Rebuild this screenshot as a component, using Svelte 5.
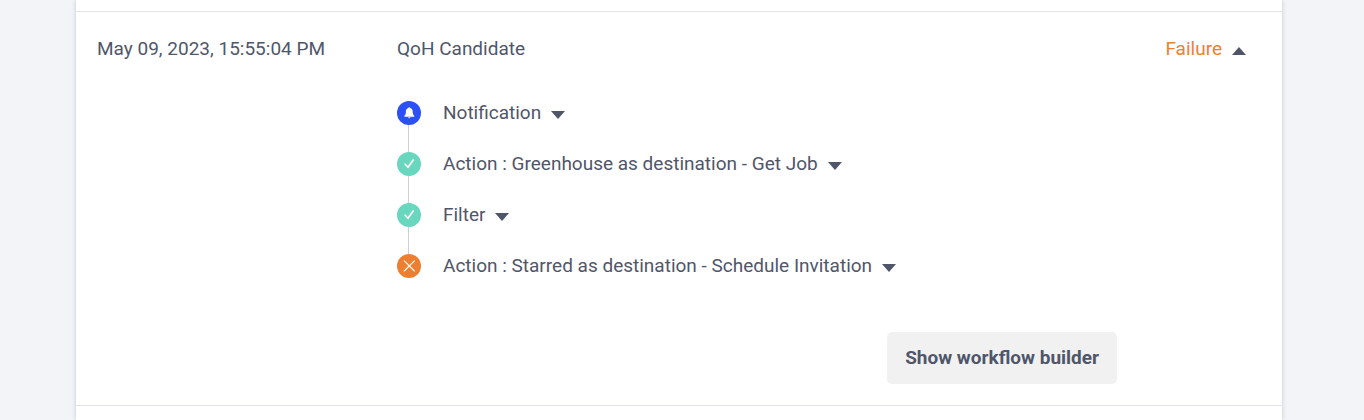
<script>
	let open = true;

	const run = {
		date: 'May 09, 2023, 15:55:04 PM',
		name: 'QoH Candidate',
		status: 'Failure'
	};

	const steps = [
		{ type: 'notification', title: 'Notification' },
		{ type: 'success', title: 'Action : Greenhouse as destination - Get Job' },
		{ type: 'success', title: 'Filter' },
		{ type: 'failure', title: 'Action : Starred as destination - Schedule Invitation' }
	];

	function toggle() {
		open = !open;
	}
</script>

<main>
	<div class="previous"></div>

	<section class="run">
		<header>
			<span class="date">{run.date}</span>
			<span class="name">{run.name}</span>
			<button class="toggle status" aria-expanded={open} on:click={toggle}>
				{run.status}
				<svg class="caret" class:up={open} viewBox="0 0 14 8" aria-hidden="true">
					<path d="M0 0H14L7 8Z" />
				</svg>
			</button>
		</header>

		{#if open}
			<ol class="steps">
				{#each steps as step}
					<li>
						<svg class="icon {step.type}" viewBox="0 0 24 24" aria-hidden="true">
							<circle cx="12" cy="12" r="12" />
							{#if step.type === 'notification'}
								<path
									class="bell"
									d="M12.3 6.2c.6 0 .9.4.9.9 1.7.5 2.5 1.8 2.5 3.5 0 2.5.5 3.5 1.5 4.2v1H7.4v-1c1-.7 1.5-1.7 1.5-4.2 0-1.7.8-3 2.5-3.5 0-.5.3-.9.9-.9ZM11.2 16.2h2.2c0 .7-.5 1.1-1.1 1.1s-1.1-.4-1.1-1.1Z"
								/>
							{:else if step.type === 'success'}
								<path class="check" d="M8.2 12.2L11 15.3L16.2 8" />
							{:else}
								<path class="cross" d="M7.2 6.8L17.4 17M17.4 6.8L7.2 17" />
							{/if}
						</svg>
						<button class="toggle">
							{step.title}
							<svg class="caret" viewBox="0 0 14 8" aria-hidden="true">
								<path d="M0 0H14L7 8Z" />
							</svg>
						</button>
					</li>
				{/each}
			</ol>

			<footer>
				<button class="builder">Show workflow builder</button>
			</footer>
		{/if}
	</section>
</main>

<style>
	:global(body) {
		background: #f3f4f8;
		color: #50566a;
		font-family: Roboto, sans-serif;
		font-size: 19px;
		line-height: 24px;
	}

	main {
		box-sizing: border-box;
		min-height: 100vh;
		margin: 0 82px 0 76px;
		background: #fff;
		box-shadow: 0 0 4px rgba(60, 60, 90, 0.25);
	}

	.previous {
		height: 11px;
	}

	.run {
		border-top: 1px solid #e2e2ea;
		border-bottom: 1px solid #e2e2ea;
	}

	header {
		display: grid;
		grid-template-columns: 300px 1fr auto;
		align-items: center;
		padding: 25px 36px 0 21px;
	}

	button {
		padding: 0;
		border: 0;
		background: none;
		color: inherit;
		font: inherit;
		cursor: pointer;
	}

	.toggle {
		display: flex;
		align-items: center;
		gap: 10px;
	}

	.status {
		color: #ee7f31;
	}

	.caret {
		width: 14px;
		height: 8px;
		margin-top: 4px;
		fill: #50566a;
	}

	.up {
		transform: rotate(180deg);
	}

	.steps {
		display: flex;
		flex-direction: column;
		gap: 27px;
		margin: 40px 0 0 321px;
		padding: 0;
		list-style: none;
	}

	li {
		position: relative;
		display: flex;
		align-items: center;
		gap: 22px;
	}

	/* line down to the next step */
	li:not(:last-child)::after {
		content: '';
		position: absolute;
		top: 24px;
		left: 11px;
		width: 1px;
		height: 27px;
		background: #cfcfd2;
	}

	.icon {
		width: 24px;
		height: 24px;
	}

	.notification circle {
		fill: #2b50f5;
	}

	.success circle {
		fill: #68d7bd;
	}

	.failure circle {
		fill: #ee7f31;
	}

	.bell {
		fill: #fff;
	}

	.check,
	.cross {
		fill: none;
		stroke: #fff;
		stroke-linecap: round;
		stroke-linejoin: round;
	}

	.check {
		stroke-width: 1.7;
	}

	.cross {
		stroke-width: 1.1;
	}

	footer {
		display: flex;
		justify-content: flex-end;
		padding: 54px 165px 21px 0;
	}

	.builder {
		padding: 14px 18px;
		border-radius: 5px;
		background: #f1f1f1;
		font-weight: 700;
	}
</style>
